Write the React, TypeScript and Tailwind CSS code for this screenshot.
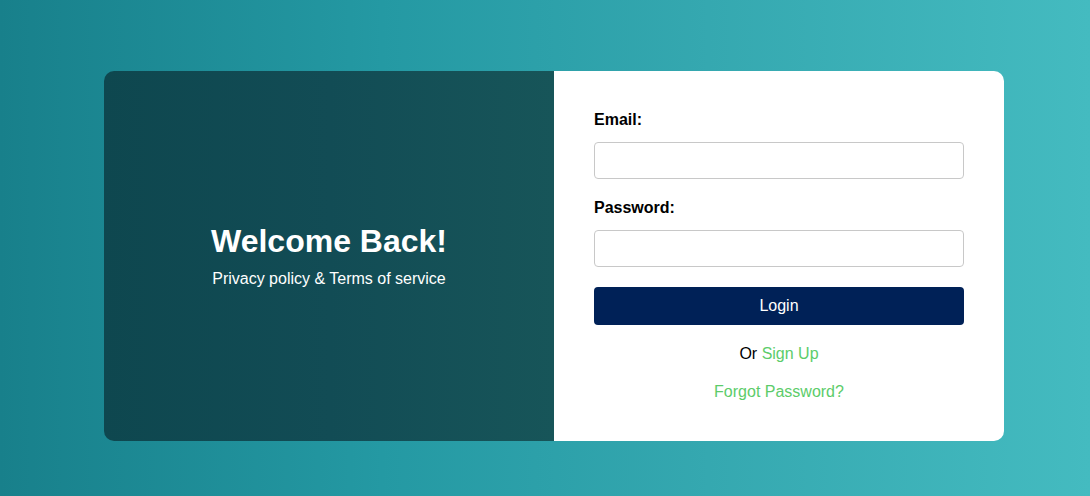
import React from "react";

export default function App() {
  return (
    <div
      className="w-full h-[496px] bg-[linear-gradient(to_right,#18808b,#2499a3_35%,#35a8b0_65%,#44bbc0)] pt-[71px] pl-[104px]"
      style={{ fontFamily: '"Liberation Sans", Arial, sans-serif' }}
    >
      <div className="flex w-[900px] h-[370px] rounded-[10px] overflow-hidden">
        <div className="w-[450px] flex flex-col items-center justify-center text-white bg-[linear-gradient(to_right,#0e474f,#124c55_50%,#175559)] pb-[1px]">
          <h1 className="text-[32px] font-bold leading-[37px]">Welcome Back!</h1>
          <p className="text-[16px] leading-[18px] mt-[10px]">Privacy policy &amp; Terms of service</p>
        </div>
        <div className="w-[450px] bg-white px-[40px] pt-[39px]">
          <label className="block text-[16px] font-bold text-black leading-[18px] mt-[1px]">Email:</label>
          <input className="block w-full h-[37px] mt-[13px] border border-[#c8c8c8] rounded-[4px] bg-white" />
          <label className="block text-[16px] font-bold text-black leading-[18px] mt-[20px]">Password:</label>
          <input type="password" className="block w-full h-[37px] mt-[13px] border border-[#c8c8c8] rounded-[4px] bg-white" />
          <button className="block w-full h-[38px] mt-[20px] bg-[#002157] text-white text-[16px] rounded-[4px]">Login</button>
          <p className="text-center text-[16px] leading-[18px] mt-[20px] text-black">
            Or <a className="text-[#5ccc6a]">Sign Up</a>
          </p>
          <p className="text-center text-[16px] leading-[18px] mt-[20px]">
            <a className="text-[#5ccc6a]">Forgot Password?</a>
          </p>
        </div>
      </div>
    </div>
  );
}
